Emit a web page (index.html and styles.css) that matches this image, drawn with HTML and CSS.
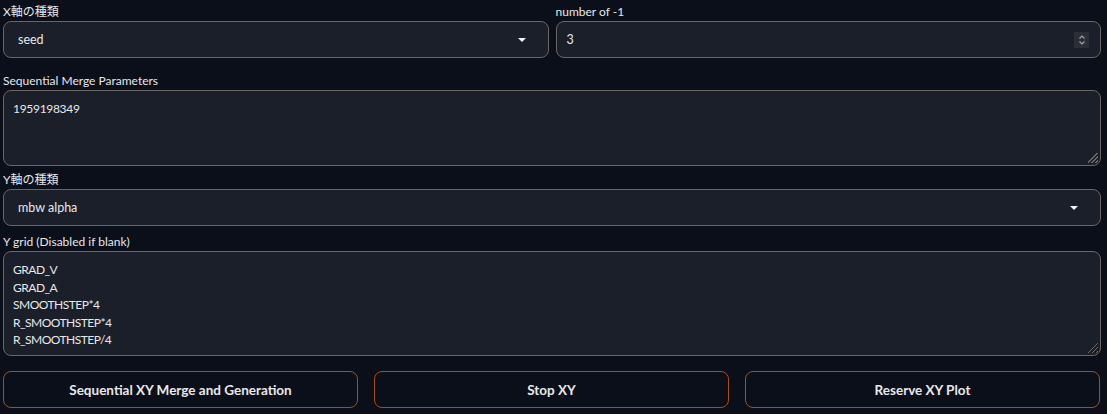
FILE: index.html
```html
<!DOCTYPE html>
<html lang="ja">
<head>
    <meta charset="UTF-8">
    <meta name="viewport" content="width=device-width, initial-scale=1.0">
    <title>XY Merge</title>
    <link rel="stylesheet" href="styles.css">
</head>
<body>
    <div class="panel">
        <!-- X axis row -->
        <div class="row">
            <div class="field">
                <label class="label">X軸の種類</label>
                <div class="select">
                    <span>seed</span>
                    <span class="caret"></span>
                </div>
            </div>
            <div class="field">
                <label class="label">number of -1</label>
                <div class="number">
                    <span>3</span>
                    <span class="stepper">
                        <svg width="8" height="12" viewBox="0 0 8 12"><path d="M1.5 4.5 L4 2 L6.5 4.5 M1.5 7.5 L4 10 L6.5 7.5" fill="none" stroke="#a0a4ab" stroke-width="1.2"/></svg>
                    </span>
                </div>
            </div>
        </div>

        <div class="field field-params">
            <label class="label">Sequential Merge Parameters</label>
            <div class="textarea params">1959198349<span class="grip"></span></div>
        </div>

        <div class="field field-y">
            <label class="label">Y軸の種類</label>
            <div class="select">
                <span>mbw alpha</span>
                <span class="caret"></span>
            </div>
        </div>

        <div class="field">
            <label class="label">Y grid (Disabled if blank)</label>
            <div class="textarea grid">GRAD_V
GRAD_A
SMOOTHSTEP*4
R_SMOOTHSTEP*4
R_SMOOTHSTEP/4<span class="grip"></span></div>
        </div>

        <div class="buttons">
            <button class="btn">Sequential XY Merge and Generation</button>
            <button class="btn">Stop XY</button>
            <button class="btn">Reserve XY Plot</button>
        </div>
    </div>
</body>
</html>
```

FILE: styles.css
```css
body {
    margin: 0;
    padding: 4px 6px 0 3px;
    background-color: #0b0f19;
    font-family: Lato, "Noto Sans CJK JP", sans-serif;
    color: #e4e4e7;
}
.panel {
    display: flex;
    flex-direction: column;
}
.row {
    display: grid;
    grid-template-columns: 1fr 1fr;
    gap: 7px;
    margin-bottom: 15px;
}
.field {
    display: flex;
    flex-direction: column;
}
.field-params {
    margin-bottom: 6px;
}
.field-y {
    margin-bottom: 8px;
}
.label {
    font-size: 12px;
    line-height: 15px;
    margin-bottom: 2px;
    color: #e5e7eb;
}
.select, .number, .textarea {
    background-color: #1a1f29;
    border: 1px solid #6b6661;
    border-radius: 8px;
    box-sizing: border-box;
    font-size: 12.5px;
    color: #e8e8ea;
}
.select, .number {
    height: 37px;
    display: flex;
    align-items: center;
    justify-content: space-between;
}
.select {
    padding: 0 22px 0 14px;
}
.number {
    padding: 0 11px 0 10px;
}
.caret {
    width: 0;
    height: 0;
    border-left: 4px solid transparent;
    border-right: 4px solid transparent;
    border-top: 4px solid #f2f2f2;
}
.stepper {
    width: 15px;
    height: 16px;
    background-color: #2b2e36;
    display: flex;
    align-items: center;
    justify-content: center;
}
.textarea {
    position: relative;
    white-space: pre;
    padding: 9px 9px;
    font-size: 12px;
    line-height: 17.5px;
}
.params {
    height: 76px;
    letter-spacing: -0.3px;
}
.grid {
    height: 105px;
    letter-spacing: -0.5px;
}
.grip {
    position: absolute;
    right: 2px;
    bottom: 2px;
    width: 10px;
    height: 10px;
    background: linear-gradient(135deg, transparent 0 45%, #6b6661 45% 52%, transparent 52% 65%, #6b6661 65% 72%, transparent 72% 85%, #6b6661 85% 92%, transparent 92%);
}
.buttons {
    display: grid;
    grid-template-columns: 1fr 1fr 1fr;
    gap: 16px;
    margin-top: 15px;
    margin-right: 1px;
}
.btn {
    height: 37px;
    background-color: transparent;
    border: 1px solid #a94d10;
    border-radius: 8px;
    color: #e8e8ea;
    font-family: Lato, sans-serif;
    font-weight: bold;
    font-size: 13.5px;
    cursor: pointer;
}
```
